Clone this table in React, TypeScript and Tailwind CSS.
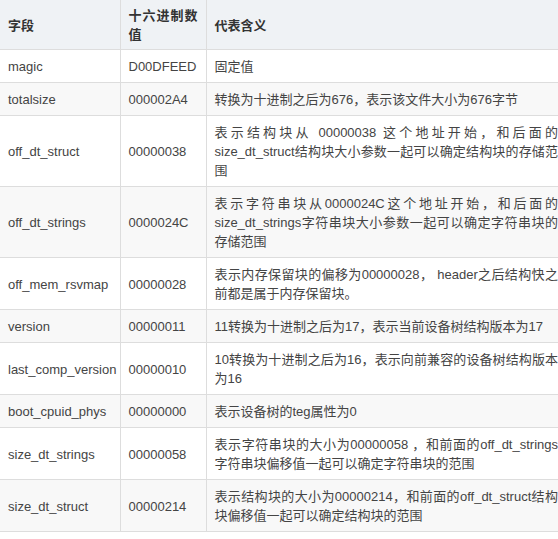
const ROWS = [
  ["magic", "D00DFEED", "固定值"],
  ["totalsize", "000002A4", "转换为十进制之后为676，表示该文件大小为676字节"],
  ["off_dt_struct", "00000038", "表示结构块从 00000038 这个地址开始，和后面的size_dt_struct结构块大小参数一起可以确定结构块的存储范围"],
  ["off_dt_strings", "0000024C", "表示字符串块从0000024C这个地址开始，和后面的size_dt_strings字符串块大小参数一起可以确定字符串块的存储范围"],
  ["off_mem_rsvmap", "00000028", "表示内存保留块的偏移为00000028， header之后结构快之前都是属于内存保留块。"],
  ["version", "00000011", "11转换为十进制之后为17，表示当前设备树结构版本为17"],
  ["last_comp_version", "00000010", "10转换为十进制之后为16，表示向前兼容的设备树结构版本为16"],
  ["boot_cpuid_phys", "00000000", "表示设备树的teg属性为0"],
  ["size_dt_strings", "00000058", "表示字符串块的大小为00000058 ，和前面的off_dt_strings字符串块偏移值一起可以确定字符串块的范围"],
  ["size_dt_struct", "00000214", "表示结构块的大小为00000214，和前面的off_dt_struct结构块偏移值一起可以确定结构块的范围"],
]

export default function App() {
  return (
    <div className="w-[558px] h-[539px] bg-white font-['Liberation_Sans','Noto_Sans_CJK_SC',sans-serif] text-[13px] leading-[19px] text-[#444]">
      <table className="w-full border-collapse table-fixed">
        <colgroup>
          <col className="w-[120px]" />
          <col className="w-[86px]" />
          <col />
        </colgroup>
        <thead>
          <tr className="bg-[#eff2f5] border-b border-[#dddddd] text-[#333] font-bold">
            <th className="text-left align-middle px-2 pt-[6px] pb-[5px] border-r border-[#dddddd]">字段</th>
            <th className="text-justify align-middle px-2 pt-[6px] pb-[5px] border-r border-[#dddddd]">十六进制数值</th>
            <th className="text-left align-middle pl-2 pr-0 pt-[6px] pb-[5px]">代表含义</th>
          </tr>
        </thead>
        <tbody>
          {ROWS.map((r, i) => (
            <tr key={i} className={`border-b border-[#dddddd] ${i % 2 === 1 ? "bg-[#f8f8f8]" : "bg-white"}`}>
              <td className="align-middle px-2 pt-[7px] pb-[6px] border-r border-[#dddddd] whitespace-nowrap">{r[0]}</td>
              <td className="align-middle px-2 pt-[7px] pb-[6px] border-r border-[#dddddd]">{r[1]}</td>
              <td className="align-middle pl-2 pr-0 pt-[7px] pb-[6px] text-justify">{r[2]}</td>
            </tr>
          ))}
        </tbody>
      </table>
    </div>
  )
}
